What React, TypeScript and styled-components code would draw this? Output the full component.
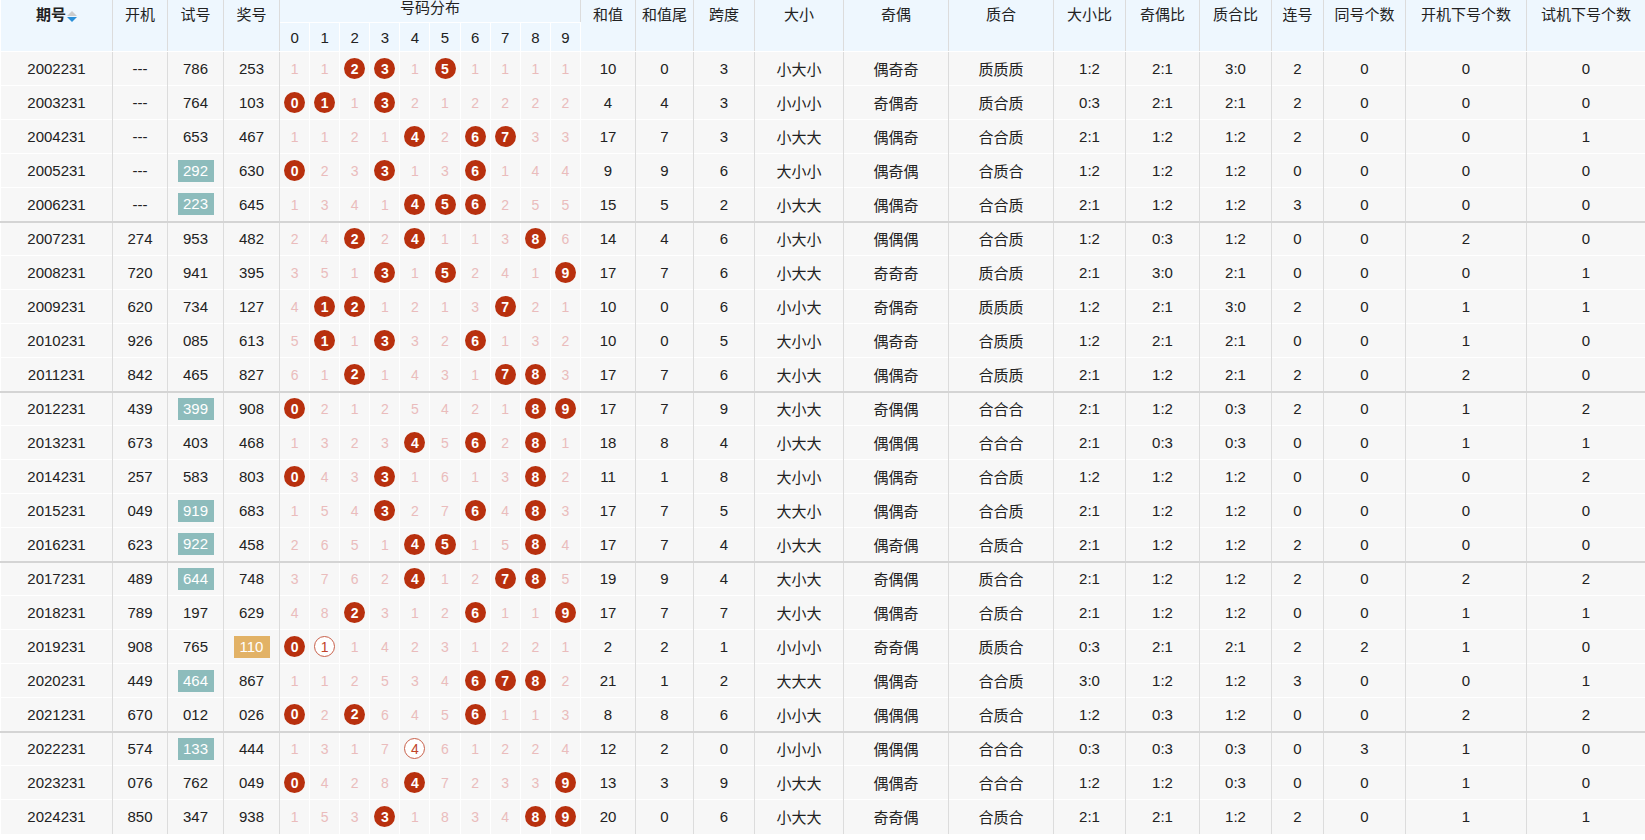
import React from "react";
import styled, { createGlobalStyle } from "styled-components";

const Global = createGlobalStyle`
  html, body { margin: 0; padding: 0; background: #fff; }
  body { font-family: "Liberation Sans", "Noto Sans CJK SC", sans-serif; overflow: hidden; }
`;

const Table = styled.table`
  border-collapse: collapse;
  width: 1645px;
  table-layout: fixed;
  font-size: 15px;
  color: #222;
`;

const Th = styled.th<{ $h?: number; $digit?: boolean }>`
  background: #eef7fe;
  font-weight: normal;
  height: ${(p) => p.$h ?? 22}px;
  padding: 0;
  border-right: 1px solid ${(p) => (p.$digit ? "#fff" : "#dcdcdc")};
  border-left: 1px solid #fff;
  border-bottom: 1px solid #fff;
  font-size: 15px;
  line-height: 1;
  text-align: center;
  vertical-align: ${(p) => (p.$digit ? "middle" : "top")};
  padding-top: ${(p) => (p.$digit ? 0 : 7)}px;
`;

const Tr = styled.tr<{ $sep?: boolean }>`
  height: 34px;
  & > td { border-top: ${(p) => (p.$sep ? "2px solid #d4d4d4" : "1px solid #fff")}; }
`;

const Td = styled.td<{ $digit?: boolean }>`
  background: #f7f7f7;
  text-align: center;
  padding: 0;
  border-right: 1px solid ${(p) => (p.$digit ? "#fff" : "#dcdcdc")};
  border-left: 1px solid #fff;
  white-space: nowrap;
`;

const Miss = styled.span`
  color: #eabcbc;
  font-size: 14px;
`;

const Ball = styled.span<{ $hollow?: boolean }>`
  display: inline-flex;
  align-items: center;
  justify-content: center;
  width: 21px;
  height: 21px;
  border-radius: 50%;
  background: ${(p) => (p.$hollow ? "#fff" : "#b8300e")};
  border: ${(p) => (p.$hollow ? "1px solid #c8604a" : "none")};
  box-sizing: border-box;
  color: ${(p) => (p.$hollow ? "#c0442a" : "#fff")};
  font-weight: ${(p) => (p.$hollow ? "normal" : "bold")};
  font-size: 14px;
`;

const Tag = styled.span<{ $c: string }>`
  display: inline-block;
  background: ${(p) => p.$c};
  color: #fff;
  width: 36px;
  line-height: 22px;
`;

const Sort = styled.span`
  display: inline-flex;
  flex-direction: column;
  vertical-align: middle;
  margin-left: 1px;
  gap: 1px;
`;

const Tri = styled.span<{ $up?: boolean }>`
  width: 0;
  height: 0;
  border-left: 5px solid transparent;
  border-right: 5px solid transparent;
  ${(p) => (p.$up ? "border-bottom: 5px solid #ccc;" : "border-top: 5px solid #2a8fd8;")}
`;

type Row = string[];
const raw = `2002231|---|786|253|11**1*1111|10|0|3|小大小|偶奇奇|质质质|1:2|2:1|3:0|2|0|0|0
2003231|---|764|103|**1*212222|4|4|3|小小小|奇偶奇|质合质|0:3|2:1|2:1|2|0|0|0
2004231|---|653|467|1121*2**33|17|7|3|小大大|偶偶奇|合合质|2:1|1:2|1:2|2|0|0|1
2005231|---|T292|630|*23*13*144|9|9|6|大小小|偶奇偶|合质合|1:2|1:2|1:2|0|0|0|0
2006231|---|T223|645|1341***255|15|5|2|小大大|偶偶奇|合合质|2:1|1:2|1:2|3|0|0|0
2007231|274|953|482|24*2*113*6|14|4|6|小大小|偶偶偶|合合质|1:2|0:3|1:2|0|0|2|0
2008231|720|941|395|351*1*241*|17|7|6|小大大|奇奇奇|质合质|2:1|3:0|2:1|0|0|0|1
2009231|620|734|127|4**1213*21|10|0|6|小小大|奇偶奇|质质质|1:2|2:1|3:0|2|0|1|1
2010231|926|085|613|5*1*32*132|10|0|5|大小小|偶奇奇|合质质|1:2|2:1|2:1|0|0|1|0
2011231|842|465|827|61*1431**3|17|7|6|大小大|偶偶奇|合质质|2:1|1:2|2:1|2|0|2|0
2012231|439|T399|908|*2125421**|17|7|9|大小大|奇偶偶|合合合|2:1|1:2|0:3|2|0|1|2
2013231|673|403|468|1323*5*2*1|18|8|4|小大大|偶偶偶|合合合|2:1|0:3|0:3|0|0|1|1
2014231|257|583|803|*43*1613*2|11|1|8|大小小|偶偶奇|合合质|1:2|1:2|1:2|0|0|0|2
2015231|049|T919|683|154*27*4*3|17|7|5|大大小|偶偶奇|合合质|2:1|1:2|1:2|0|0|0|0
2016231|623|T922|458|2651**15*4|17|7|4|小大大|偶奇偶|合质合|2:1|1:2|1:2|2|0|0|0
2017231|489|T644|748|3762*12**5|19|9|4|大小大|奇偶偶|质合合|2:1|1:2|1:2|2|0|2|2
2018231|789|197|629|48*312*11*|17|7|7|大小大|偶偶奇|合质合|2:1|1:2|1:2|0|0|1|1
2019231|908|765|O110|*o14231221|2|2|1|小小小|奇奇偶|质质合|0:3|2:1|2:1|2|2|1|0
2020231|449|T464|867|112534***2|21|1|2|大大大|偶偶奇|合合质|3:0|1:2|1:2|3|0|0|1
2021231|670|012|026|*2*645*113|8|8|6|小小大|偶偶偶|合质合|1:2|0:3|1:2|0|0|2|2
2022231|574|T133|444|1317o61224|12|2|0|小小小|偶偶偶|合合合|0:3|0:3|0:3|0|3|1|0
2023231|076|762|049|*428*7233*|13|3|9|小大大|偶偶奇|合合合|1:2|1:2|0:3|0|0|1|0
2024231|850|347|938|153*1834**|20|0|6|小大大|奇奇偶|合质合|2:1|2:1|1:2|2|0|1|1`;

const rows: Row[] = raw.split("\n").map((l) => l.split("|"));

const widths = [112, 55, 56, 56, ...Array(10).fill(30.1), 55, 58, 61, 89, 105, 105, 72, 74, 72, 52, 82, 121, 119];
const heads = ["和值", "和值尾", "跨度", "大小", "奇偶", "质合", "大小比", "奇偶比", "质合比", "连号", "同号个数", "开机下号个数", "试机下号个数"];

function Val({ v }: { v: string }) {
  if (v.startsWith("T")) return <Tag $c="#8dbcbc">{v.slice(1)}</Tag>;
  if (v.startsWith("O")) return <Tag $c="#e2b266">{v.slice(1)}</Tag>;
  return <>{v}</>;
}

function Digits({ s }: { s: string }) {
  const chars = s.slice(0, 10).split("");
  return (
    <>
      {chars.map((c, i) => (
        <Td $digit key={i}>
          {c === "*" ? <Ball>{i}</Ball> : c === "o" ? <Ball $hollow>{i}</Ball> : <Miss>{c}</Miss>}
        </Td>
      ))}
    </>
  );
}

export default function App() {
  return (
    <>
      <Global />
      <Table>
        <colgroup>
          {widths.map((w, i) => (
            <col key={i} style={{ width: w }} />
          ))}
        </colgroup>
        <thead>
          <tr>
            <Th rowSpan={2}>
              <b>期号</b>
              <Sort>
                <Tri $up />
                <Tri />
              </Sort>
            </Th>
            <Th rowSpan={2}>开机</Th>
            <Th rowSpan={2}>试号</Th>
            <Th rowSpan={2}>奖号</Th>
            <Th colSpan={10} $h={22} style={{ verticalAlign: "top", paddingTop: 0 }}>号码分布</Th>
            {heads.map((h) => (
              <Th rowSpan={2} key={h}>{h}</Th>
            ))}
          </tr>
          <tr>
            {Array.from({ length: 10 }, (_, i) => (
              <Th $digit $h={28} key={i}>{i}</Th>
            ))}
          </tr>
        </thead>
        <tbody>
          {rows.map((r, ri) => (
            <Tr key={ri} $sep={ri > 0 && ri % 5 === 0}>
              <Td>{r[0]}</Td>
              <Td>{r[1]}</Td>
              <Td><Val v={r[2]} /></Td>
              <Td><Val v={r[3]} /></Td>
              <Digits s={r[4]} />
              {r.slice(5).map((v, i) => (
                <Td key={i}>{v}</Td>
              ))}
            </Tr>
          ))}
        </tbody>
      </Table>
    </>
  );
}
